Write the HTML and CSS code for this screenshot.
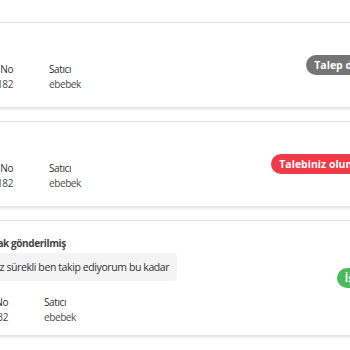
FILE: index.html
```html
<!DOCTYPE html>
<html lang="tr">
<head>
<meta charset="utf-8">
<link rel="stylesheet" href="styles.css">
</head>
<body>
<div class="page">
  <div class="card">
    <div class="card-body">
      <div class="card-title">İade</div>
      <div class="meta">
        <div class="meta-col meta-order"><span class="meta-label">Sipariş No</span><span class="meta-value">2024182</span></div>
        <div class="meta-col"><span class="meta-label">Satıcı</span><span class="meta-value">ebebek</span></div>
      </div>
    </div>
    <span class="badge badge-gray">Talep değerlendiriliyor</span>
  </div>
  <div class="card">
    <div class="card-body">
      <div class="card-title">İade</div>
      <div class="meta">
        <div class="meta-col meta-order"><span class="meta-label">Sipariş No</span><span class="meta-value">2024182</span></div>
        <div class="meta-col"><span class="meta-label">Satıcı</span><span class="meta-value">ebebek</span></div>
      </div>
    </div>
    <span class="badge badge-red">Talebiniz olumsuz sonuçlandı</span>
  </div>
  <div class="card card-note">
    <div class="card-body">
      <div class="card-title">Satıcıya mesajın bırak gönderilmiş</div>
      <div class="note">Kargom gelmedi siz sürekli ben takip ediyorum bu kadar</div>
      <div class="meta">
        <div class="meta-col meta-order"><span class="meta-label">Sipariş No</span><span class="meta-value">20241832</span></div>
        <div class="meta-col"><span class="meta-label">Satıcı</span><span class="meta-value">ebebek</span></div>
      </div>
    </div>
    <span class="badge badge-green">İşleme alınmıştır</span>
  </div>
</div>
</body>
</html>
```
FILE: styles.css
```css
html, body {
  margin: 0;
  padding: 0;
  background: #ffffff;
  overflow: hidden;
}
body {
  font-family: "Open Sans", "Noto Sans", sans-serif;
  color: #333;
  width: 350px;
  height: 350px;
}
.page {
  width: 560px;
  margin-left: -103px;
  padding-top: 22px;
  display: flex;
  flex-direction: column;
  gap: 14px;
}
.card {
  display: flex;
  align-items: center;
  justify-content: space-between;
  background: #fff;
  border-top: 1px solid #e6e6e6;
  box-shadow: 0 2px 3px rgba(0, 0, 0, 0.13);
  padding: 0 16px;
}
.card-body {
  display: flex;
  flex-direction: column;
  align-items: flex-start;
  padding: 15px 0 15px;
}
.card-title {
  font-size: 10px;
  line-height: 14px;
  font-weight: 700;
  color: #444;
  letter-spacing: -0.4px;
  margin-bottom: 10px;
  white-space: nowrap;
}
.card-note .card-body {
  padding: 15px 0 10px;
  margin-left: -5px;
}
.card-note .card-title {
  margin-bottom: 3px;
}
.note {
  background: #f4f4f4;
  border-radius: 4px;
  padding: 6px 8px;
  font-size: 10.5px;
  line-height: 16px;
  letter-spacing: -0.4px;
  color: #333;
  white-space: nowrap;
  margin-bottom: 14px;
}
.meta {
  display: flex;
  gap: 36px;
}
.meta-col {
  display: flex;
  flex-direction: column;
}
.meta-order {
  width: 100px;
  text-align: right;
}
.meta-label {
  font-size: 10px;
  line-height: 15px;
  color: #2e2e2e;
  letter-spacing: -0.4px;
}
.meta-value {
  font-size: 10px;
  line-height: 15px;
  color: #4a4a4a;
  letter-spacing: -0.4px;
}
.badge {
  display: inline-block;
  height: 20px;
  line-height: 20px;
  padding: 0 8px;
  border-radius: 10px;
  color: #fff;
  font-size: 10.5px;
  font-weight: 700;
  white-space: nowrap;
}
.badge-gray { background: #757575; }
.badge-red { background: #ef3a47; }
.badge-green { background: #4dbb5c; }
```
